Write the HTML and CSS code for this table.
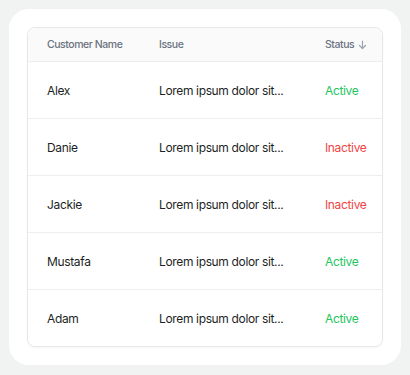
FILE: index.html
```html
<!DOCTYPE html>
<html>
<head>
<meta charset="utf-8">
<link rel="stylesheet" href="styles.css">
</head>
<body>
<div class="panel">
  <div class="table">
    <div class="row head">
      <div class="cell">Customer Name</div>
      <div class="cell">Issue</div>
      <div class="cell status-h">Status
        <svg class="arrow" width="9" height="10" viewBox="0 0 9 10"><path d="M4.5 1v7.5M1.5 5.5l3 3 3-3" fill="none" stroke="#9ca3af" stroke-width="1.2" stroke-linecap="round" stroke-linejoin="round"/></svg>
      </div>
    </div>
    <div class="row">
      <div class="cell">Alex</div>
      <div class="cell">Lorem ipsum dolor sit...</div>
      <div class="cell active">Active</div>
    </div>
    <div class="row">
      <div class="cell">Danie</div>
      <div class="cell">Lorem ipsum dolor sit...</div>
      <div class="cell inactive">Inactive</div>
    </div>
    <div class="row">
      <div class="cell">Jackie</div>
      <div class="cell">Lorem ipsum dolor sit...</div>
      <div class="cell inactive">Inactive</div>
    </div>
    <div class="row">
      <div class="cell">Mustafa</div>
      <div class="cell">Lorem ipsum dolor sit...</div>
      <div class="cell active">Active</div>
    </div>
    <div class="row">
      <div class="cell">Adam</div>
      <div class="cell">Lorem ipsum dolor sit...</div>
      <div class="cell active">Active</div>
    </div>
  </div>
</div>
</body>
</html>
```

FILE: styles.css
```css
html, body {
  margin: 0;
  padding: 0;
}
body {
  background: #f1f3f2;
  font-family: Inter, "Liberation Sans", sans-serif;
  padding: 9px;
  width: 392px;
  height: 357px;
}
.panel {
  background: #ffffff;
  border-radius: 20px;
  height: 356px;
  box-sizing: border-box;
  padding: 18px;
}
.table {
  border: 1px solid #e6e7e9;
  border-radius: 8px;
  overflow: hidden;
  box-shadow: 0 1px 2px rgba(0,0,0,0.04);
}
.row {
  display: grid;
  grid-template-columns: 112px 166px 1fr;
  align-items: center;
  height: 56px;
  border-bottom: 1px solid #eeeeef;
  font-size: 12px;
  letter-spacing: -0.35px;
  color: #1d1f24;
}
.row:last-child {
  border-bottom: none;
}
.row.head {
  height: 33px;
  background: #fafafa;
  font-size: 10.5px;
  letter-spacing: -0.45px;
  font-weight: 500;
  color: #6b7280;
}
.cell {
  padding-left: 19px;
  white-space: nowrap;
}
.status-h {
  display: flex;
  align-items: center;
  gap: 4px;
}
.arrow {
  display: block;
}
.active {
  color: #22c55e;
}
.inactive {
  color: #ef4444;
}
```
